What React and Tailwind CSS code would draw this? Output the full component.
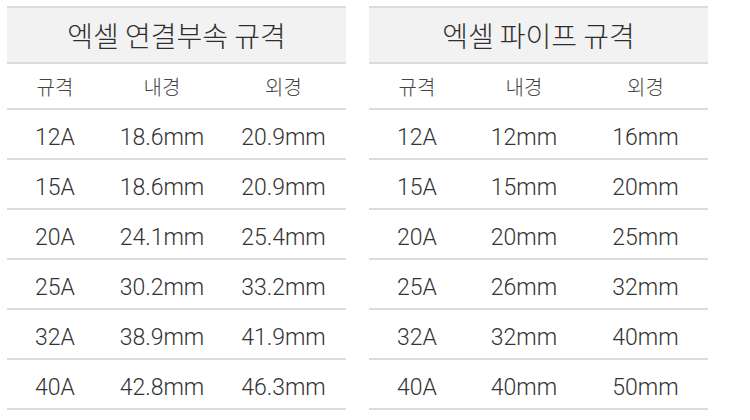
import React from 'react';

const fittings = [
    ['12A', '18.6mm', '20.9mm'],
    ['15A', '18.6mm', '20.9mm'],
    ['20A', '24.1mm', '25.4mm'],
    ['25A', '30.2mm', '33.2mm'],
    ['32A', '38.9mm', '41.9mm'],
    ['40A', '42.8mm', '46.3mm'],
];

const pipes = [
    ['12A', '12mm', '16mm'],
    ['15A', '15mm', '20mm'],
    ['20A', '20mm', '25mm'],
    ['25A', '26mm', '32mm'],
    ['32A', '32mm', '40mm'],
    ['40A', '40mm', '50mm'],
];

const SpecTable = ({ title, rows }) => (
    <div className="w-[339px] border-t-2 border-[#dcdcdc]">
        {/* Title */}
        <div className="h-[56px] bg-[#f2f2f2] border-b-2 border-[#dcdcdc] flex items-center justify-center text-[28px] text-[#2e2e2e] font-light">
            {title}
        </div>

        {/* Column heads */}
        <div className="h-[46px] pt-[2px] border-b-2 border-[#dcdcdc] flex items-center text-[20px] text-[#444] font-light">
            <div className="w-[96px] text-center">규격</div>
            <div className="w-[118px] text-center">내경</div>
            <div className="w-[125px] text-center">외경</div>
        </div>

        {/* Rows */}
        {rows.map(([size, inner, outer]) => (
            <div
                key={size}
                className="h-[50px] pt-[9px] border-b-2 border-[#dcdcdc] flex items-center text-[23px] text-[#333] font-light"
                style={{ fontFamily: 'Roboto, "Noto Sans CJK KR", sans-serif' }}
            >
                <div className="w-[96px] text-center">{size}</div>
                <div className="w-[118px] text-center">{inner}</div>
                <div className="w-[125px] text-center">{outer}</div>
            </div>
        ))}
    </div>
);

const App = () => {
    return (
        <div
            className="w-[750px] h-[420px] bg-white pt-[6px] pl-[7px] flex gap-[23px]"
            style={{ fontFamily: '"Noto Sans CJK KR", "Noto Sans", sans-serif' }}
        >
            <SpecTable title="엑셀 연결부속 규격" rows={fittings} />
            <SpecTable title="엑셀 파이프 규격" rows={pipes} />
        </div>
    );
};

export default App;
